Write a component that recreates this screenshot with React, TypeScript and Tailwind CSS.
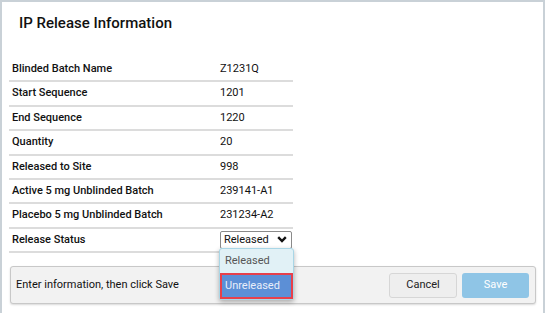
import React from "react";

// Lista dos campos mostrados no modal de liberação
const LINHAS: Array<{ label: string; valor: string }> = [
  { label: "Blinded Batch Name", valor: "Z1231Q" },
  { label: "Start Sequence", valor: "1201" },
  { label: "End Sequence", valor: "1220" },
  { label: "Quantity", valor: "20" },
  { label: "Released to Site", valor: "998" },
  { label: "Active 5 mg Unblinded Batch", valor: "239141-A1" },
  { label: "Placebo 5 mg Unblinded Batch", valor: "231234-A2" },
];

export default function App() {
  return (
    <div className="w-[545px] h-[313px] overflow-hidden bg-[#c9d1d7] pt-[2px] pr-[2px] pl-[2px]" style={{ fontFamily: "Roboto, 'Liberation Sans', sans-serif" }}>
      <div className="relative h-full bg-white">
        <h2 className="pl-[17px] pt-[11px] text-[15px] font-medium leading-[20px] text-[#111]">IP Release Information</h2>

        {/* tabela */}
        <div className="mt-[25px] ml-[7px] w-[284px]">
          {LINHAS.map((l) => (
            <div key={l.label} className="flex items-center h-[24.4px] border-b-2 border-[#dcdcdc] text-[11px] text-[#111]">
              <div className="w-[211px] pl-[3px] font-medium">{l.label}</div>
              <div>{l.valor}</div>
            </div>
          ))}
          <div className="flex items-center h-[24.4px] border-b-2 border-[#dcdcdc] text-[11px] text-[#111]">
            <div className="w-[211px] pl-[3px] font-medium">Release Status</div>
            <div className="flex items-center justify-between w-[72px] h-[18px] border border-[#8a8a8a] rounded-[2px] bg-white pl-[3px] pr-[4px] text-[11px]">
              <span>Released</span>
              <svg width="10" height="7" viewBox="0 0 10 7"><path d="M1.2 1.2L5 5l3.8-3.8" fill="none" stroke="#111" strokeWidth="2.4" /></svg>
            </div>
          </div>
        </div>

        {/* rodapé */}
        <div className="absolute left-[8px] top-[264px] w-[526px] h-[38px] flex items-center justify-between bg-[#f2f2f2] border border-[#c8c8c8] rounded-[3px] shadow-[0_1px_2px_rgba(0,0,0,0.15)] pl-[5px] pr-[6px]">
          <span className="text-[11px] text-[#111]">Enter information, then click Save</span>
          <div className="flex gap-[5px]">
            <button className="w-[68px] h-[25px] bg-[#eeeeee] border border-[#d6d6d6] rounded-[3px] text-[11px] text-[#222]">Cancel</button>
            <button className="w-[67px] h-[25px] bg-[#8fc5e6] rounded-[3px] text-[11px] text-white">Save</button>
          </div>
        </div>

        {/* opções abertas do select */}
        <div className="absolute left-[217px] top-[246px] w-[75px] border border-[#a9d6e6] rounded-[3px] bg-[#e1f1f6] shadow-[0_2px_5px_rgba(0,0,0,0.3)] text-[11px]">
          <div className="h-[24px] flex items-center pl-[5px] text-[#555]">Released</div>
          <div className="h-[26px] border-2 border-[#e8404a] bg-[#5c8fd6] flex items-center pl-[3px] text-[#e8eefa]">Unreleased</div>
        </div>
      </div>
    </div>
  );
}
